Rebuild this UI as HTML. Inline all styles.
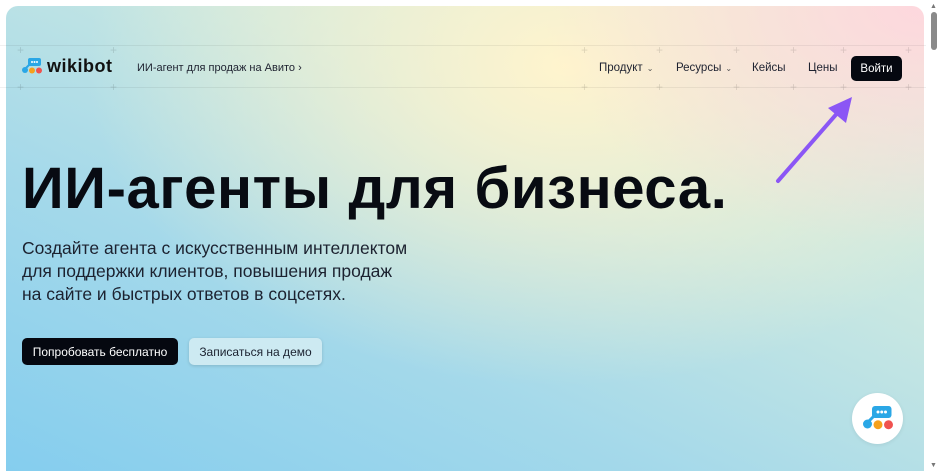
<!DOCTYPE html>
<html><head><meta charset="utf-8"><style>
*{margin:0;padding:0;box-sizing:border-box}
html,body{width:940px;height:471px;overflow:hidden}
body{background:#fff;font-family:"Liberation Sans","DejaVu Sans",sans-serif;color:#0b0d14;position:relative}
.card{position:absolute;left:6px;top:6px;width:918px;height:470px;border-radius:12px 12px 0 0;overflow:hidden;
background:
radial-gradient(ellipse 380px 240px at 918px 0px,rgba(255,214,222,.95),rgba(255,214,222,0) 100%),
radial-gradient(ellipse 480px 320px at 560px 60px,rgba(255,244,205,1),rgba(255,244,205,0) 100%),
linear-gradient(25deg,#84cdee 0%,#a5d9ea 35%,#c8e7e2 65%,#e4f0da 100%);}
.hl{position:absolute;left:0;width:926px;height:1px;background:rgba(0,0,0,.06)}
.plus{position:absolute;color:rgba(0,0,0,.12);font-size:12px;line-height:12px}
.nav{position:absolute;font-size:11.5px;color:#1e2230}
.chev{font-size:8px;margin-left:4px;color:#555}
h1{position:absolute;left:22px;top:155px;font-size:58px;font-weight:700;letter-spacing:.6px;white-space:nowrap;color:#080b12}
.sub{position:absolute;left:22px;top:237px;font-size:17.5px;line-height:23px;color:#1c2230}
.btn{position:absolute;border-radius:5px;font-size:12px;display:flex;align-items:center;justify-content:center;white-space:nowrap}
</style></head><body>
<div class="card"></div>
<div class="hl" style="top:45px"></div>
<div class="hl" style="top:87px"></div>
<span class="plus" style="left:17px;top:44px">+</span><span class="plus" style="left:110px;top:44px">+</span>
<span class="plus" style="left:17px;top:81px">+</span><span class="plus" style="left:110px;top:81px">+</span>
<span class="plus" style="left:581px;top:44px">+</span><span class="plus" style="left:656px;top:44px">+</span><span class="plus" style="left:733px;top:44px">+</span><span class="plus" style="left:790px;top:44px">+</span><span class="plus" style="left:840px;top:44px">+</span><span class="plus" style="left:905px;top:44px">+</span>
<span class="plus" style="left:581px;top:81px">+</span><span class="plus" style="left:656px;top:81px">+</span><span class="plus" style="left:733px;top:81px">+</span><span class="plus" style="left:790px;top:81px">+</span><span class="plus" style="left:840px;top:81px">+</span><span class="plus" style="left:905px;top:81px">+</span>
<svg style="position:absolute;left:22px;top:58px" width="20" height="16" viewBox="0 0 20 16">
<rect x="6" y="0" width="13" height="8" rx="2" fill="#2aa7e6"/>
<circle cx="10" cy="4" r="1" fill="#fff"/><circle cx="12.5" cy="4" r="1" fill="#fff"/><circle cx="15" cy="4" r="1" fill="#fff"/>
<path d="M7 7 L3 11" stroke="#2aa7e6" stroke-width="2"/>
<circle cx="3" cy="12" r="3" fill="#2aa7e6"/><circle cx="10" cy="12.5" r="3" fill="#f6a11c"/><circle cx="17" cy="12.5" r="3" fill="#f0524f"/>
</svg>
<div style="position:absolute;left:47px;top:56px;font-size:18px;font-weight:700;color:#111;letter-spacing:.5px">wikibot</div>
<div class="nav" style="left:137px;top:62px;font-size:11px">ИИ-агент для продаж на Авито <span style="font-size:11px">&#8250;</span></div>
<div class="nav" style="left:599px;top:62px">Продукт<span class="chev">&#8964;</span></div>
<div class="nav" style="left:676px;top:62px">Ресурсы<span class="chev">&#8964;</span></div>
<div class="nav" style="left:752px;top:62px">Кейсы</div>
<div class="nav" style="left:808px;top:62px">Цены</div>
<div class="btn" style="left:851px;top:56px;width:51px;height:25px;background:#050810;color:#fff;font-size:11.5px">Войти</div>
<svg style="position:absolute;left:770px;top:90px" width="95" height="100" viewBox="0 0 95 100">
<line x1="8" y1="91" x2="70" y2="20" stroke="#8b56f5" stroke-width="4" stroke-linecap="round"/>
<polygon points="82,7 58,18 76,33" fill="#8b56f5"/>
</svg>
<h1>ИИ-агенты для бизнеса.</h1>
<div class="sub">Создайте агента с искусственным интеллектом<br>для поддержки клиентов, повышения продаж<br>на сайте и быстрых ответов в соцсетях.</div>
<div class="btn" style="left:22px;top:338px;width:156px;height:27px;background:#050810;color:#fff">Попробовать бесплатно</div>
<div class="btn" style="left:189px;top:338px;width:133px;height:27px;background:#cdeaf2;color:#1b2230;box-shadow:0 1px 3px rgba(0,0,0,.15)">Записаться на демо</div>
<div style="position:absolute;left:852px;top:393px;width:51px;height:51px;border-radius:50%;background:#fff;box-shadow:0 1px 4px rgba(0,0,0,.08)"></div>
<svg style="position:absolute;left:863px;top:406px" width="30" height="24" viewBox="0 0 20 16">
<rect x="6" y="0" width="13" height="8" rx="2" fill="#2aa7e6"/>
<circle cx="10" cy="4" r="1" fill="#fff"/><circle cx="12.5" cy="4" r="1" fill="#fff"/><circle cx="15" cy="4" r="1" fill="#fff"/>
<path d="M7 7 L3 11" stroke="#2aa7e6" stroke-width="2"/>
<circle cx="3" cy="12" r="3" fill="#2aa7e6"/><circle cx="10" cy="12.5" r="3" fill="#f6a11c"/><circle cx="17" cy="12.5" r="3" fill="#f0524f"/>
</svg>
<div style="position:absolute;left:927px;top:0;width:13px;height:471px;background:#fff"></div>
<div style="position:absolute;left:931px;top:12px;width:6px;height:38px;border-radius:3px;background:#8a8a8a"></div>
<div style="position:absolute;left:930px;top:3px;font-size:7px;color:#777">&#9650;</div>
<div style="position:absolute;left:930px;top:462px;font-size:7px;color:#777">&#9660;</div>
</body></html>
